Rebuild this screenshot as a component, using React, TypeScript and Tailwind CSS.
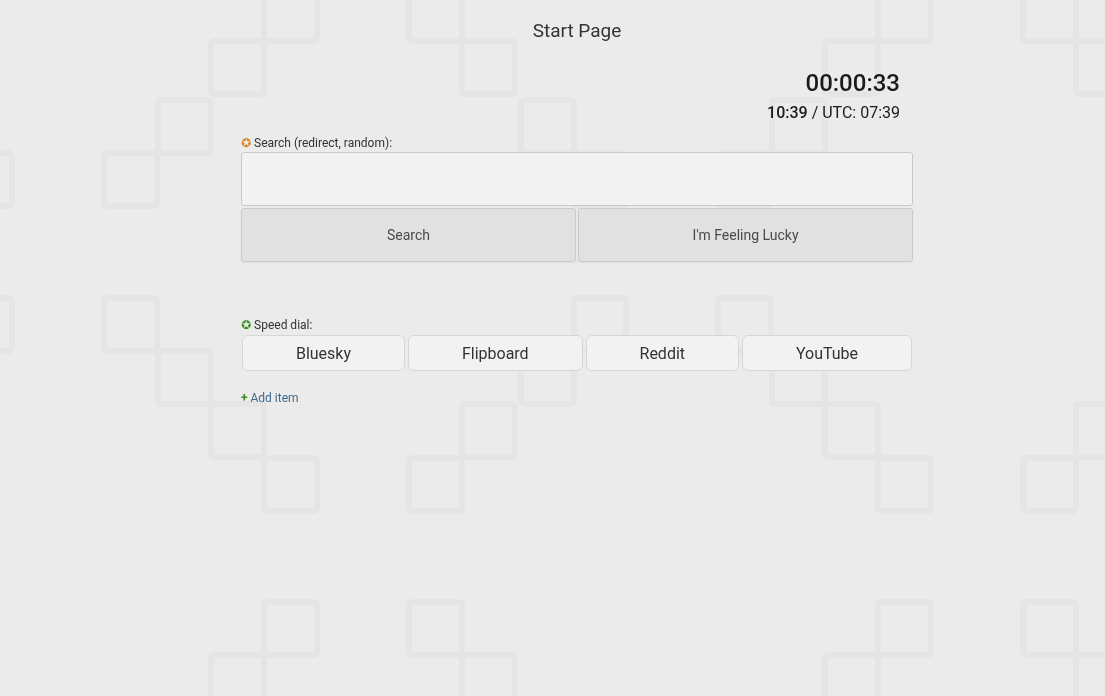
import { useState } from "react";

const speedDial = [
  { name: "Bluesky", url: "https://bsky.app" },
  { name: "Flipboard", url: "https://flipboard.com" },
  { name: "Reddit", url: "https://www.reddit.com" },
  { name: "YouTube", url: "https://www.youtube.com" },
];

// top left corners of the squares inside one 614px tile
const squares = [
  [264, -12], [211, 41], [158, 100], [104, 153],
  [104, 298], [158, 351], [211, 404], [264, 458],
  [409, -12], [462, 41], [521, 100], [574, 153],
  [574, 298], [521, 351], [462, 404], [409, 458],
  [264, 602], [409, 602],
  // wraps in from the tile on the left
  [-41, 153], [-41, 298],
];

function Backdrop() {
  return (
    <svg className="fixed inset-0 -z-10 h-full w-full bg-[#ebebeb]" aria-hidden="true">
      <defs>
        <pattern id="squares" width="614" height="614" patternUnits="userSpaceOnUse">
          {squares.map(([x, y]) => (
            <rect
              key={`${x},${y}`}
              x={x}
              y={y}
              width="53"
              height="53"
              rx="3"
              fill="none"
              stroke="#e5e5e5"
              strokeWidth="6"
            />
          ))}
        </pattern>
      </defs>
      <rect width="100%" height="100%" fill="url(#squares)" />
    </svg>
  );
}

export default function App() {
  const [query, setQuery] = useState("");

  return (
    <div className="min-h-screen pl-[49px] font-[Roboto,'Liberation_Sans',sans-serif] text-[#333]">
      <Backdrop />
      <main className="mx-auto max-w-[672px]">
        <h1 className="pt-[19px] text-center text-[19px] leading-6">Start Page</h1>

        {/* Clock */}
        <div className="pt-6 pr-[13px] text-right text-[#1a1a1a]">
          <div className="text-2xl font-medium">00:00:33</div>
          <div className="pt-0.5 text-base">
            <span className="font-medium">10:39</span> / UTC: 07:39
          </div>
        </div>

        {/* Search */}
        <form className="pt-2.5" onSubmit={(e) => e.preventDefault()}>
          <label htmlFor="q" className="block pb-px text-xs">
            <span className="font-['DejaVu_Sans',sans-serif] text-[#d9821a]">✪</span> Search
            (redirect, random):
          </label>
          <input
            id="q"
            type="text"
            value={query}
            onChange={(e) => setQuery(e.target.value)}
            className="block h-[54px] w-full rounded-[3px] border border-[#c8c8c8] bg-[#f2f2f2] px-3 text-base outline-none"
          />
          <div className="grid grid-cols-2 gap-0.5 pt-0.5">
            <button
              type="submit"
              className="h-[54px] rounded-[3px] border border-[#cacaca] bg-[#e1e1e1] text-sm text-[#4a4a4a] shadow-xs"
            >
              Search
            </button>
            <button
              type="button"
              className="h-[54px] rounded-[3px] border border-[#cacaca] bg-[#e1e1e1] text-sm text-[#4a4a4a] shadow-xs"
            >
              I'm Feeling Lucky
            </button>
          </div>
        </form>

        {/* Speed dial */}
        <section className="pt-[55px]">
          <h2 className="text-xs">
            <span className="font-['DejaVu_Sans',sans-serif] text-[#3b8f22]">✪</span> Speed dial:
          </h2>
          <nav className="flex flex-wrap gap-[3px] px-px pt-0.5">
            {speedDial.map((item) => (
              <a
                key={item.name}
                href={item.url}
                className="flex h-9 flex-auto items-center justify-center rounded-md border border-[#d6d6d6] bg-[#f2f2f2] pt-0.5 text-base"
              >
                {item.name}
              </a>
            ))}
          </nav>
          <a href="#add" className="mt-[19px] inline-block text-xs text-[#416a8c]">
            <span className="font-bold text-[#3b8f22]">+</span> Add item
          </a>
        </section>
      </main>
    </div>
  );
}
